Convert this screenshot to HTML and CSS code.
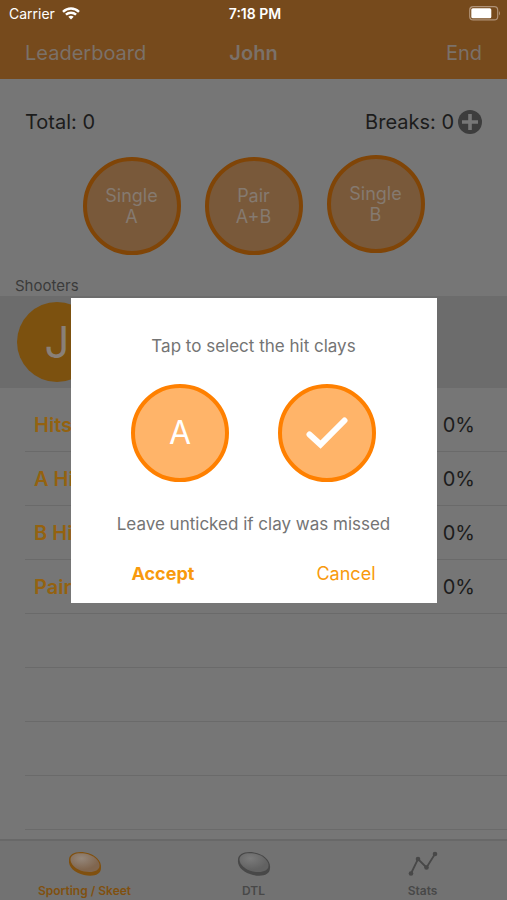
FILE: index.html
```html
<!DOCTYPE html>
<html lang="en">
  <head>
    <meta charset="UTF-8" />
    <meta name="viewport" content="width=device-width, initial-scale=1.0" />
    <title>John</title>
    <link rel="stylesheet" href="styles.css">
  </head>
  <body>
    <div class="app">
      <header class="header">
        <div class="status">
          <div class="carrier">
            <span>Carrier</span>
            <svg width="18" height="13" viewBox="0 0 18 13" fill="none" stroke="#fff" stroke-width="2.4">
              <path d="M1 4.8C5.600 .3 12.400 .3 17 4.800M3.900 7.700C6.800 5 11.200 5 14.100 7.700" />
              <path d="M9 12.500L6.300 9.800Q9 7.700 11.700 9.800Z" fill="#fff" stroke="none" />
            </svg>
          </div>
          <strong>7:18 PM</strong>
          <svg class="battery" width="32" height="15" viewBox="0 0 32 15">
            <rect x=".7" y=".7" width="28" height="13.200" rx="3.500" fill="none" stroke="#b09277" stroke-width="1.200" />
            <rect x="2.300" y="2.300" width="20" height="10" rx="1.500" fill="#fff" />
            <path d="M30 5Q32 7.300 30 9.600Z" fill="#b09277" />
          </svg>
        </div>
        <nav class="navbar">
          <button class="nav-button">Leaderboard</button>
          <h1>John</h1>
          <button class="nav-button end">End</button>
        </nav>
      </header>

      <main>
        <div class="totals">
          <span>Total: 0</span>
          <div class="breaks">
            <span>Breaks: 0</span>
            <button class="add" aria-label="Add break">
              <svg width="24" height="24" viewBox="0 0 24 24">
                <circle cx="12" cy="12" r="12" fill="#3d3d3d" />
                <path d="M12 4V20M4 12H20" stroke="#777" stroke-width="3.600" />
              </svg>
            </button>
          </div>
        </div>

        <div class="throws">
          <button class="clay">Single<br>A</button>
          <button class="clay">Pair<br>A+B</button>
          <button class="clay raised">Single<br>B</button>
        </div>

        <h2>Shooters</h2>
        <div class="shooter"><div class="avatar">J</div></div>

        <table class="stats">
          <tr><th scope="row">Hits</th><td>0%</td></tr>
          <tr><th scope="row">A Hits</th><td>0%</td></tr>
          <tr><th scope="row">B Hits</th><td>0%</td></tr>
          <tr><th scope="row">Pairs</th><td>0%</td></tr>
          <tr><th></th><td></td></tr>
          <tr><th></th><td></td></tr>
          <tr><th></th><td></td></tr>
          <tr><th></th><td></td></tr>
        </table>
      </main>

      <nav class="tabs">
        <a href="#sporting" class="tab active">
          <svg width="34" height="26" viewBox="0 0 34 26">
            <defs>
              <radialGradient id="orangeClay" cx=".38" cy=".28" r=".6">
                <stop offset="0" stop-color="#94877b" />
                <stop offset="1" stop-color="#80664f" />
              </radialGradient>
            </defs>
            <path d="M1 9C1 3 8 0 17 1.500C27 3 34 10 33 17C33 24 25 26 16 24C7 22 0 16 1 9Z" fill="#80500f" />
            <path d="M2.500 8C3 3 9 1.500 17 2.500C26 4 32 10 31.500 15C31 20 25 22 16 20.500C8 19 2 13 2.500 8Z" fill="url(#orangeClay)" />
          </svg>
          <span>Sporting / Skeet</span>
        </a>
        <a href="#dtl" class="tab">
          <svg width="34" height="26" viewBox="0 0 34 26">
            <defs>
              <radialGradient id="greyClay" cx=".38" cy=".28" r=".6">
                <stop offset="0" stop-color="#7b7b7b" />
                <stop offset="1" stop-color="#626262" />
              </radialGradient>
            </defs>
            <path d="M1 9C1 3 8 0 17 1.500C27 3 34 10 33 17C33 24 25 26 16 24C7 22 0 16 1 9Z" fill="#484848" />
            <path d="M2.500 8C3 3 9 1.500 17 2.500C26 4 32 10 31.500 15C31 20 25 22 16 20.500C8 19 2 13 2.500 8Z" fill="url(#greyClay)" />
          </svg>
          <span>DTL</span>
        </a>
        <a href="#stats" class="tab">
          <svg width="30" height="26" viewBox="0 0 30 26" fill="#484848">
            <path d="M3 22.500L10 8L18.500 16.500L27 3" fill="none" stroke="#484848" stroke-width="1.800" />
            <circle cx="3" cy="22.500" r="2.300" />
            <circle cx="10" cy="8" r="2.300" />
            <circle cx="18.500" cy="16.500" r="2.300" />
            <circle cx="27" cy="3" r="2.300" />
          </svg>
          <span>Stats</span>
        </a>
      </nav>
    </div>

    <div class="overlay">
      <div class="dialog" role="dialog" aria-labelledby="dialog-title">
        <p id="dialog-title">Tap to select the hit clays</p>
        <div class="choices">
          <button class="clay choice">A</button>
          <button class="clay choice" aria-label="Hit">
            <svg width="42" height="32" viewBox="0 0 42 32" fill="none" stroke="#fff" stroke-width="6" stroke-linecap="round">
              <path d="M3.500 17.500L14.500 27.500L38.500 3.500" />
            </svg>
          </button>
        </div>
        <p>Leave unticked if clay was missed</p>
        <div class="actions">
          <button class="action accept">Accept</button>
          <button class="action">Cancel</button>
        </div>
      </div>
    </div>
  </body>
</html>
```

FILE: styles.css
```css
* {
  box-sizing: border-box;
}

body {
  margin: 0;
  font-family: Inter, "Liberation Sans", sans-serif;
  background-color: #767676;
  color: #1c1c1c;
}

button {
  padding: 0;
  border: none;
  background: none;
  font-family: inherit;
  cursor: pointer;
}

svg {
  display: block;
}

.app {
  display: flex;
  flex-direction: column;
  height: 100vh;
  overflow: hidden;
}

main {
  flex: 1;
  min-height: 0;
  overflow: hidden;
}

.header {
  flex-shrink: 0;
  background-color: #764a1c;
}

.status {
  display: grid;
  grid-template-columns: 1fr auto 1fr;
  align-items: center;
  height: 27px;
  padding: 0 6px 0 9px;
  color: #fff;
  font-size: 14px;
}

.status strong {
  font-weight: 600;
}

.carrier {
  display: flex;
  align-items: center;
  gap: 7px;
}

.battery {
  justify-self: end;
}

.navbar {
  display: grid;
  grid-template-columns: 1fr auto 1fr;
  align-items: center;
  height: 52px;
  padding: 0 25px;
  color: #7b7169;
}

.navbar h1 {
  margin: 0;
  font-size: 20px;
  font-weight: 600;
}

.nav-button {
  color: inherit;
  font-size: 20px;
  text-align: left;
}

.end {
  text-align: right;
}

.totals {
  display: flex;
  justify-content: space-between;
  align-items: center;
  height: 85px;
  padding: 0 25px;
  font-size: 20px;
}

.breaks {
  display: flex;
  align-items: center;
  gap: 4px;
}

.throws {
  display: flex;
  justify-content: center;
  align-items: flex-end;
  gap: 24px;
  height: 91px;
}

.clay {
  display: flex;
  justify-content: center;
  align-items: center;
  width: 98px;
  height: 98px;
  border: 4px solid #804507;
  border-radius: 50%;
  background-color: #79593a;
  color: #857a70;
  font-size: 18px;
  line-height: 21px;
}

.raised {
  margin-bottom: 2px;
}

h2 {
  margin: 20px 15px 0;
  font-size: 15px;
  font-weight: 400;
  line-height: 21px;
  color: #3b3b3b;
}

.shooter {
  height: 92px;
  padding: 6px 17px;
  background-color: #6c6c6c;
}

.avatar {
  display: flex;
  justify-content: center;
  align-items: center;
  width: 80px;
  height: 80px;
  border-radius: 50%;
  background-color: #7c510f;
  color: #898078;
  font-size: 44px;
}

.stats {
  width: calc(100% - 25px);
  margin: 9px 0 0 25px;
  border-collapse: collapse;
  font-size: 20px;
}

.stats tr {
  height: 54px;
  border-bottom: 1px solid #6a6a6a;
}

.stats th {
  padding: 2px 9px 0;
  color: #94620f;
  font-weight: 600;
  text-align: left;
}

.stats td {
  padding: 2px 32px 0;
  text-align: right;
}

.tabs {
  display: flex;
  flex-shrink: 0;
  height: 61px;
  border-top: 2px solid #686868;
  background-color: #727272;
}

.tab {
  display: flex;
  flex: 1;
  flex-direction: column;
  align-items: center;
  gap: 6px;
  padding-top: 10px;
  color: #484848;
  font-size: 12px;
  font-weight: 600;
  text-decoration: none;
}

.active {
  color: #80500f;
}

.overlay {
  position: fixed;
  inset: 0;
  display: flex;
  justify-content: center;
  align-items: center;
}

.dialog {
  width: 366px;
  max-width: 90%;
  padding: 38px 32px 17px;
  background-color: #fff;
  text-align: center;
}

.dialog p {
  margin: 0;
  color: #747474;
  font-size: 17px;
  line-height: 20px;
}

.choices {
  display: flex;
  justify-content: center;
  gap: 49px;
  margin: 28px 0 32px;
}

.choice {
  border-color: #ff8000;
  background-color: #ffb469;
  color: #fff;
  font-size: 32px;
}

.actions {
  display: flex;
  justify-content: space-between;
  padding: 0 29px;
  margin-top: 28px;
}

.action {
  color: #f89a0c;
  font-size: 18px;
  line-height: 24px;
}

.accept {
  font-weight: 700;
}
```
